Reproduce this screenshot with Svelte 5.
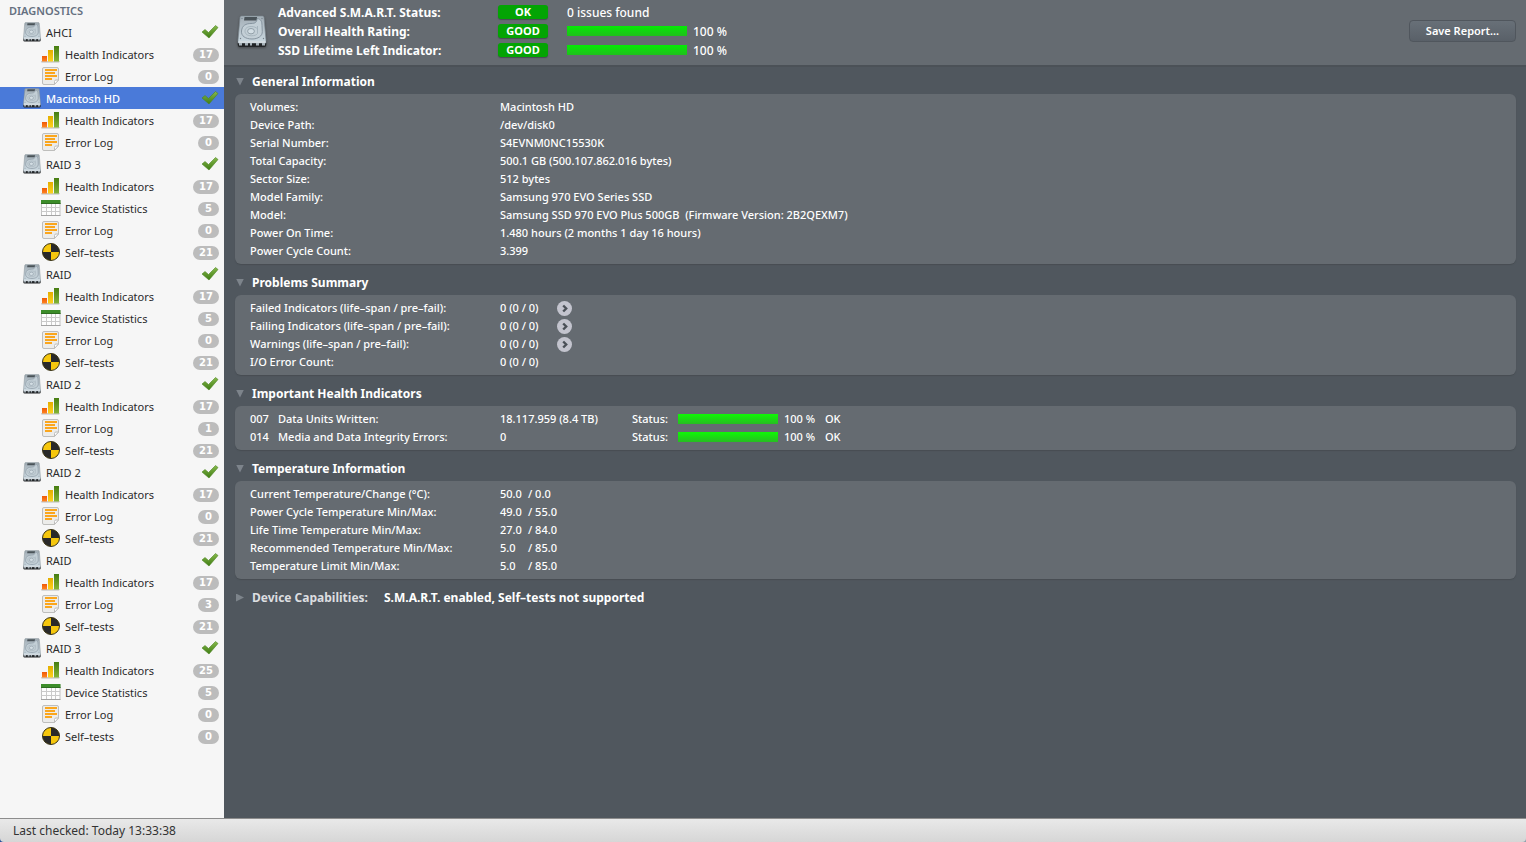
<script>
  const health = (n) => ({ icon: 'bars', label: 'Health Indicators', count: n });
  const stats = (n) => ({ icon: 'sheet', label: 'Device Statistics', count: n });
  const log = (n) => ({ icon: 'log', label: 'Error Log', count: n });
  const tests = (n) => ({ icon: 'test', label: 'Self–tests', count: n });

  const drives = [
    { name: 'AHCI', items: [health(17), log(0)] },
    { name: 'Macintosh HD', items: [health(17), log(0)] },
    { name: 'RAID 3', items: [health(17), stats(5), log(0), tests(21)] },
    { name: 'RAID', items: [health(17), stats(5), log(0), tests(21)] },
    { name: 'RAID 2', items: [health(17), log(1), tests(21)] },
    { name: 'RAID 2', items: [health(17), log(0), tests(21)] },
    { name: 'RAID', items: [health(17), log(3), tests(21)] },
    { name: 'RAID 3', items: [health(25), stats(5), log(0), tests(0)] }
  ];
  let selected = $state(1);

  const ratings = [
    { label: 'Advanced S.M.A.R.T. Status:', badge: 'OK', text: '0 issues found' },
    { label: 'Overall Health Rating:', badge: 'GOOD', value: 100 },
    { label: 'SSD Lifetime Left Indicator:', badge: 'GOOD', value: 100 }
  ];

  const general = [
    ['Volumes:', 'Macintosh HD'],
    ['Device Path:', '/dev/disk0'],
    ['Serial Number:', 'S4EVNM0NC15530K'],
    ['Total Capacity:', '500.1 GB (500.107.862.016 bytes)'],
    ['Sector Size:', '512 bytes'],
    ['Model Family:', 'Samsung 970 EVO Series SSD'],
    ['Model:', 'Samsung SSD 970 EVO Plus 500GB  (Firmware Version: 2B2QEXM7)'],
    ['Power On Time:', '1.480 hours (2 months 1 day 16 hours)'],
    ['Power Cycle Count:', '3.399']
  ];
  const problems = [
    ['Failed Indicators (life–span / pre–fail):', '0 (0 / 0)', true],
    ['Failing Indicators (life–span / pre–fail):', '0 (0 / 0)', true],
    ['Warnings (life–span / pre–fail):', '0 (0 / 0)', true],
    ['I/O Error Count:', '0 (0 / 0)', false]
  ];
  const indicators = [
    { id: '007', name: 'Data Units Written:', raw: '18.117.959 (8.4 TB)', value: 100, status: 'OK' },
    { id: '014', name: 'Media and Data Integrity Errors:', raw: '0', value: 100, status: 'OK' }
  ];
  const temperatures = [
    ['Current Temperature/Change (°C):', '50.0', '0.0'],
    ['Power Cycle Temperature Min/Max:', '49.0', '55.0'],
    ['Life Time Temperature Min/Max:', '27.0', '84.0'],
    ['Recommended Temperature Min/Max:', '5.0', '85.0'],
    ['Temperature Limit Min/Max:', '5.0', '85.0']
  ];
</script>

{#snippet driveIcon()}
  <svg class="drive" viewBox="0 0 30 33" aria-hidden="true">
    <path d="M.8 26h28.400v4q0 2-2 2H2.800q-2 0-2-2z" fill="#222527" />
    <path d="M4.500 1h21q1.300 0 1.500 1.500L29 25v3H1v-3L3 2.500Q3.200 1 4.500 1z" fill="url(#metal)" stroke="#7c8890" stroke-width=".7" />
    <path d="M7.500 2h12.500v3.500H7z" fill="#4a5359" />
    <path d="M1.500 26h27v2h-27z" fill="#d3dbe0" />
    <path d="M2 28h3v2.500H2zM8 28h3v2.500H8zM13 28h2v2.500h-2zM19 28h3v2.500h-3zM25 28h3v2.500h-3z" fill="#a9b4bb" />
    <path d="M20 3.500c4 .5 5 3 5 7l.3 6c.2 4.500-4.300 7.500-10.300 7.500-6.500 0-11-3-10.500-8C5 10.500 9 8.500 14 8.500c4.500 0 6-1.500 6-5z" fill="#c3cfd6" stroke="#8795a0" />
    <path d="M20.500 11v7.500c-1 1.500-3 2.300-6 2.300-4 0-6.500-1.800-6.500-4.600 0-3 2.500-4.700 6.200-4.700 3 0 5 1 6.300 2.500" fill="none" stroke="#a0aeb7" stroke-width=".8" />
    <ellipse cx="14" cy="16.200" rx="3.400" ry="2.700" fill="#d3dee4" stroke="#8a98a2" stroke-width=".9" />
    <circle cx="5" cy="3.500" r=".7" fill="#75828b" /><circle cx="25" cy="3.500" r=".7" fill="#75828b" />
    <circle cx="3.500" cy="23.500" r=".7" fill="#75828b" /><circle cx="26.500" cy="23.500" r=".7" fill="#75828b" />
  </svg>
{/snippet}

{#snippet itemIcon(kind)}
  <svg class="glyph" viewBox="0 0 20 20" aria-hidden="true">
    {#if kind === 'bars'}
      <path d="M0 17.300h19l-1 1.200H.500z" fill="#bababa" />
      <path d="M1 12h5v5.500H1z" fill="url(#orange)" />
      <path d="M7 6h5v11.500H7z" fill="url(#yellow)" />
      <path d="M13 2h5v15.500h-5z" fill="url(#green)" />
    {:else if kind === 'sheet'}
      <path d="M.5 2.500h18.500v15H.5z" fill="#fdfdfd" stroke="#c2c2c2" />
      <path d="M0 2h19.500v4H0z" fill="#3c8d2a" />
      <path d="M0 5h19.500v1H0z" fill="#2d6c20" />
      <path d="M.5 9.500h18.500M.5 13.500h18.500M5.500 6v11.500M10.500 6v11.500M14.500 6v11.500" stroke="#cacaca" fill="none" />
      <path d="M0 17.500h19.500" stroke="#a3a3a3" />
    {:else if kind === 'log'}
      <path d="M3 1.500h13q1.500 0 1.500 1.500v11l-4 4.500H3q-1.500 0-1.500-1.500V3q0-1.500 1.500-1.500z" fill="#ececea" stroke="#bebebc" />
      <path d="M17.500 14l-4 4.500v-3q0-1.500 1.500-1.500z" fill="#fff" stroke="#bebebc" stroke-linejoin="round" />
      <path d="M4 4h12M4 7h10M4 10h12M4 13h7" stroke="#fba61c" stroke-width="1.800" />
    {:else}
      <circle cx="10" cy="10" r="8.500" fill="#f6c70d" />
      <path d="M10 10V1.500a8.500 8.500 0 0 1 8.500 8.500zM10 10v8.500A8.500 8.500 0 0 1 1.500 10z" fill="#292929" />
      <circle cx="10" cy="10" r="8.500" fill="none" stroke="#3a3418" stroke-width="1" />
    {/if}
  </svg>
{/snippet}

{#snippet meter(value, wide)}
  <span class="meter" class:wide role="meter" aria-label="Rating" aria-valuenow={value} aria-valuemin="0" aria-valuemax="100">
    <span class="fill" style="width: {value}%"></span>
  </span>
{/snippet}

<svg class="defs" width="0" height="0" aria-hidden="true">
  <defs>
    <linearGradient id="metal" x1="0" y1="0" x2="0" y2="1"><stop offset="0" stop-color="#a3aeb6" /><stop offset="1" stop-color="#cbd9e1" /></linearGradient>
    <linearGradient id="orange" x1="0" y1="0" x2="0" y2="1"><stop offset="0" stop-color="#ef5a08" /><stop offset="1" stop-color="#ff8420" /></linearGradient>
    <linearGradient id="yellow" x1="0" y1="0" x2="0" y2="1"><stop offset="0" stop-color="#e3ae00" /><stop offset="1" stop-color="#ffd21c" /></linearGradient>
    <linearGradient id="green" x1="0" y1="0" x2="0" y2="1"><stop offset="0" stop-color="#467d12" /><stop offset="1" stop-color="#84b535" /></linearGradient>
    <linearGradient id="tick" x1="0" y1="0" x2="0" y2="1"><stop offset="0" stop-color="#86b94a" /><stop offset="1" stop-color="#3f7d14" /></linearGradient>
  </defs>
</svg>

<div class="window">
  <div class="body">
    <nav aria-label="Diagnostics">
      <h2>DIAGNOSTICS</h2>
      {#each drives as drive, i}
        <button class="row drive-row" class:selected={selected === i} onclick={() => (selected = i)}>
          {@render driveIcon()}
          <span class="name">{drive.name}</span>
          <svg class="tick" viewBox="0 0 18 16" aria-hidden="true"><path d="M1 8L4 5.500L7.500 8.500L14.500 1.500L17 3.500L8 14z" fill="url(#tick)" stroke="#4c8522" stroke-width=".6" stroke-linejoin="round" /></svg>
        </button>
        {#each drive.items as item}
          <button class="row item-row">
            {@render itemIcon(item.icon)}
            <span class="name">{item.label}</span>
            <span class="count">{item.count}</span>
          </button>
        {/each}
      {/each}
    </nav>

    <main>
      <header>
        {@render driveIcon()}
        <div class="ratings">
          {#each ratings as r}
            <div class="rating">
              <strong>{r.label}</strong>
              <span class="badge">{r.badge}</span>
              {#if r.text}
                <span>{r.text}</span>
              {:else}
                <span class="score">{@render meter(r.value, true)}{r.value} %</span>
              {/if}
            </div>
          {/each}
        </div>
        <button class="save">Save Report...</button>
      </header>

      <div class="sections">
        <details open>
          <summary>General Information</summary>
          <dl class="panel">
            {#each general as [label, value]}
              <div class="line"><dt>{label}</dt><dd>{value}</dd></div>
            {/each}
          </dl>
        </details>

        <details open>
          <summary>Problems Summary</summary>
          <dl class="panel">
            {#each problems as [label, value, link]}
              <div class="line">
                <dt>{label}</dt>
                <dd class="linked">
                  <span>{value}</span>
                  {#if link}
                    <button class="go" aria-label="Show {label}">
                      <svg viewBox="0 0 15 15" aria-hidden="true"><circle cx="7.500" cy="7.500" r="7.500" fill="#c3c4ce" /><path d="M6.200 4.500l3 3-3 3" fill="none" stroke="#4a5057" stroke-width="2.400" /></svg>
                    </button>
                  {/if}
                </dd>
              </div>
            {/each}
          </dl>
        </details>

        <details open>
          <summary>Important Health Indicators</summary>
          <div class="panel">
            <table>
              <tbody>
                {#each indicators as row}
                  <tr>
                    <td class="id">{row.id}</td>
                    <td class="title">{row.name}</td>
                    <td class="raw">{row.raw}</td>
                    <td class="status">Status:</td>
                    <td class="bar">{@render meter(row.value, false)}</td>
                    <td class="percent">{row.value} %</td>
                    <td>{row.status}</td>
                  </tr>
                {/each}
              </tbody>
            </table>
          </div>
        </details>

        <details open>
          <summary>Temperature Information</summary>
          <dl class="panel">
            {#each temperatures as [label, low, high]}
              <div class="line"><dt>{label}</dt><dd class="range"><span>{low}</span><span>/ {high}</span></dd></div>
            {/each}
          </dl>
        </details>

        <details>
          <summary><span class="muted">Device Capabilities:</span><span>S.M.A.R.T. enabled, Self–tests not supported</span></summary>
        </details>
      </div>
    </main>
  </div>
  <footer>Last checked: Today 13:33:38</footer>
</div>

<style>
  :global(body) { margin: 0; }
  * { box-sizing: border-box; }
  .defs { position: absolute; }
  button { font: inherit; color: inherit; border: 0; padding: 0; background: none; }
  .window {
    min-height: 100vh;
    display: flex;
    flex-direction: column;
    background: linear-gradient(90deg, #27509a 50%, #8fa0ac 50%);
    font-family: "Lucida Grande", "Noto Sans", sans-serif;
    font-size: 11px;
    line-height: 18px;
  }
  .body { flex: 1; display: flex; }

  nav { width: 224px; flex: none; background: #f6f6f6; color: #2b2b2b; }
  h2 { margin: 0; padding-left: 9px; font-size: 11px; line-height: 21px; font-weight: 600; color: #657080; }
  .row { display: flex; align-items: center; width: 100%; height: 22px; padding-right: 5px; text-align: left; }
  .drive-row { padding-left: 22px; }
  .drive-row .drive { width: 20px; height: 20px; margin-right: 4px; }
  .item-row { padding-left: 41px; }
  .glyph { width: 20px; height: 20px; margin-right: 4px; }
  .name { flex: 1; padding-top: 2px; }
  .selected { background: #4a7ad9; color: #fff; font-weight: 500; }
  .tick { width: 18px; height: 16px; }
  .count {
    min-width: 21px;
    margin-top: 2px;
    padding: 0 6px;
    border-radius: 7px;
    background: #bcbcbc;
    color: #fff;
    font-family: "DejaVu Sans", sans-serif;
    font-size: 10px;
    font-weight: 700;
    line-height: 14px;
    text-align: center;
  }

  main { flex: 1; min-width: 0; background: #50575e; color: #fff; font-weight: 500; }
  header {
    display: flex;
    align-items: center;
    height: 67px;
    padding: 0 10px 3px 13px;
    border-bottom: 2px solid #4b5157;
    background: #656b71;
    font-size: 12px;
    line-height: 19px;
  }
  header .drive { width: 30px; height: 33px; margin-right: 11px; filter: drop-shadow(0 1px 1px #333a); }
  .ratings { flex: 1; }
  .rating { display: grid; grid-template-columns: 220px 69px 1fr; align-items: center; }
  .rating strong { font-weight: 700; }
  .badge {
    width: 50px;
    border-radius: 3px;
    background: #03a403;
    box-shadow: 0 1px 1px #464c51;
    font-size: 11px;
    font-weight: 700;
    line-height: 14px;
    text-align: center;
  }
  .score { display: flex; align-items: center; gap: 6px; }
  .meter { display: block; width: 100px; height: 10px; }
  .wide { width: 120px; }
  .fill { display: block; height: 100%; background: linear-gradient(#0ff805, #27bd22); }
  .wide .fill { background: linear-gradient(#05ea05, #1fc01c); }
  .save {
    width: 107px;
    height: 22px;
    border: 1px solid #50565d;
    border-radius: 4px;
    background: linear-gradient(#687078, #596068);
    font-size: 11px;
    font-weight: 600;
    line-height: 18px;
  }

  .sections { padding: 0 10px 0 11px; }
  summary {
    display: flex;
    align-items: center;
    padding: 6px 0 0 1px;
    font-size: 12px;
    font-weight: 700;
    line-height: 25px;
    list-style: none;
  }
  summary::before {
    content: "";
    width: 8px;
    height: 8px;
    margin-right: 8px;
    background: #7d848b;
    clip-path: polygon(0 0, 100% 50%, 0 100%);
  }
  details[open] > summary::before { clip-path: polygon(0 0, 100% 0, 50% 100%); }
  details:first-child summary { padding-top: 2px; }
  .muted { margin-right: 16px; color: #dcdee0; }
  .panel { margin: 0; padding: 4px 15px; border-radius: 6px; background: #656b71; box-shadow: 0 1px 1px #474d53; }
  .line { display: grid; grid-template-columns: 250px 1fr; }
  dd { margin: 0; white-space: pre-wrap; }
  .linked { display: grid; grid-template-columns: 57px 15px; align-items: center; }
  .go { height: 15px; }
  .go svg { display: block; width: 15px; height: 15px; }
  .range { display: grid; grid-template-columns: 28px 1fr; }
  table { border-collapse: collapse; }
  td { height: 18px; padding: 0; }
  .id { width: 28px; }
  .title { width: 222px; }
  .raw { width: 132px; }
  .status { width: 46px; }
  .bar { width: 106px; }
  .percent { width: 41px; }

  footer {
    padding: 3px 13px 2px;
    border-top: 1px solid #8d8d8d;
    border-radius: 0 0 4px 4px;
    background: linear-gradient(#e9e9e9, #d6d6d6);
    color: #333;
    font-size: 12px;
  }
</style>
